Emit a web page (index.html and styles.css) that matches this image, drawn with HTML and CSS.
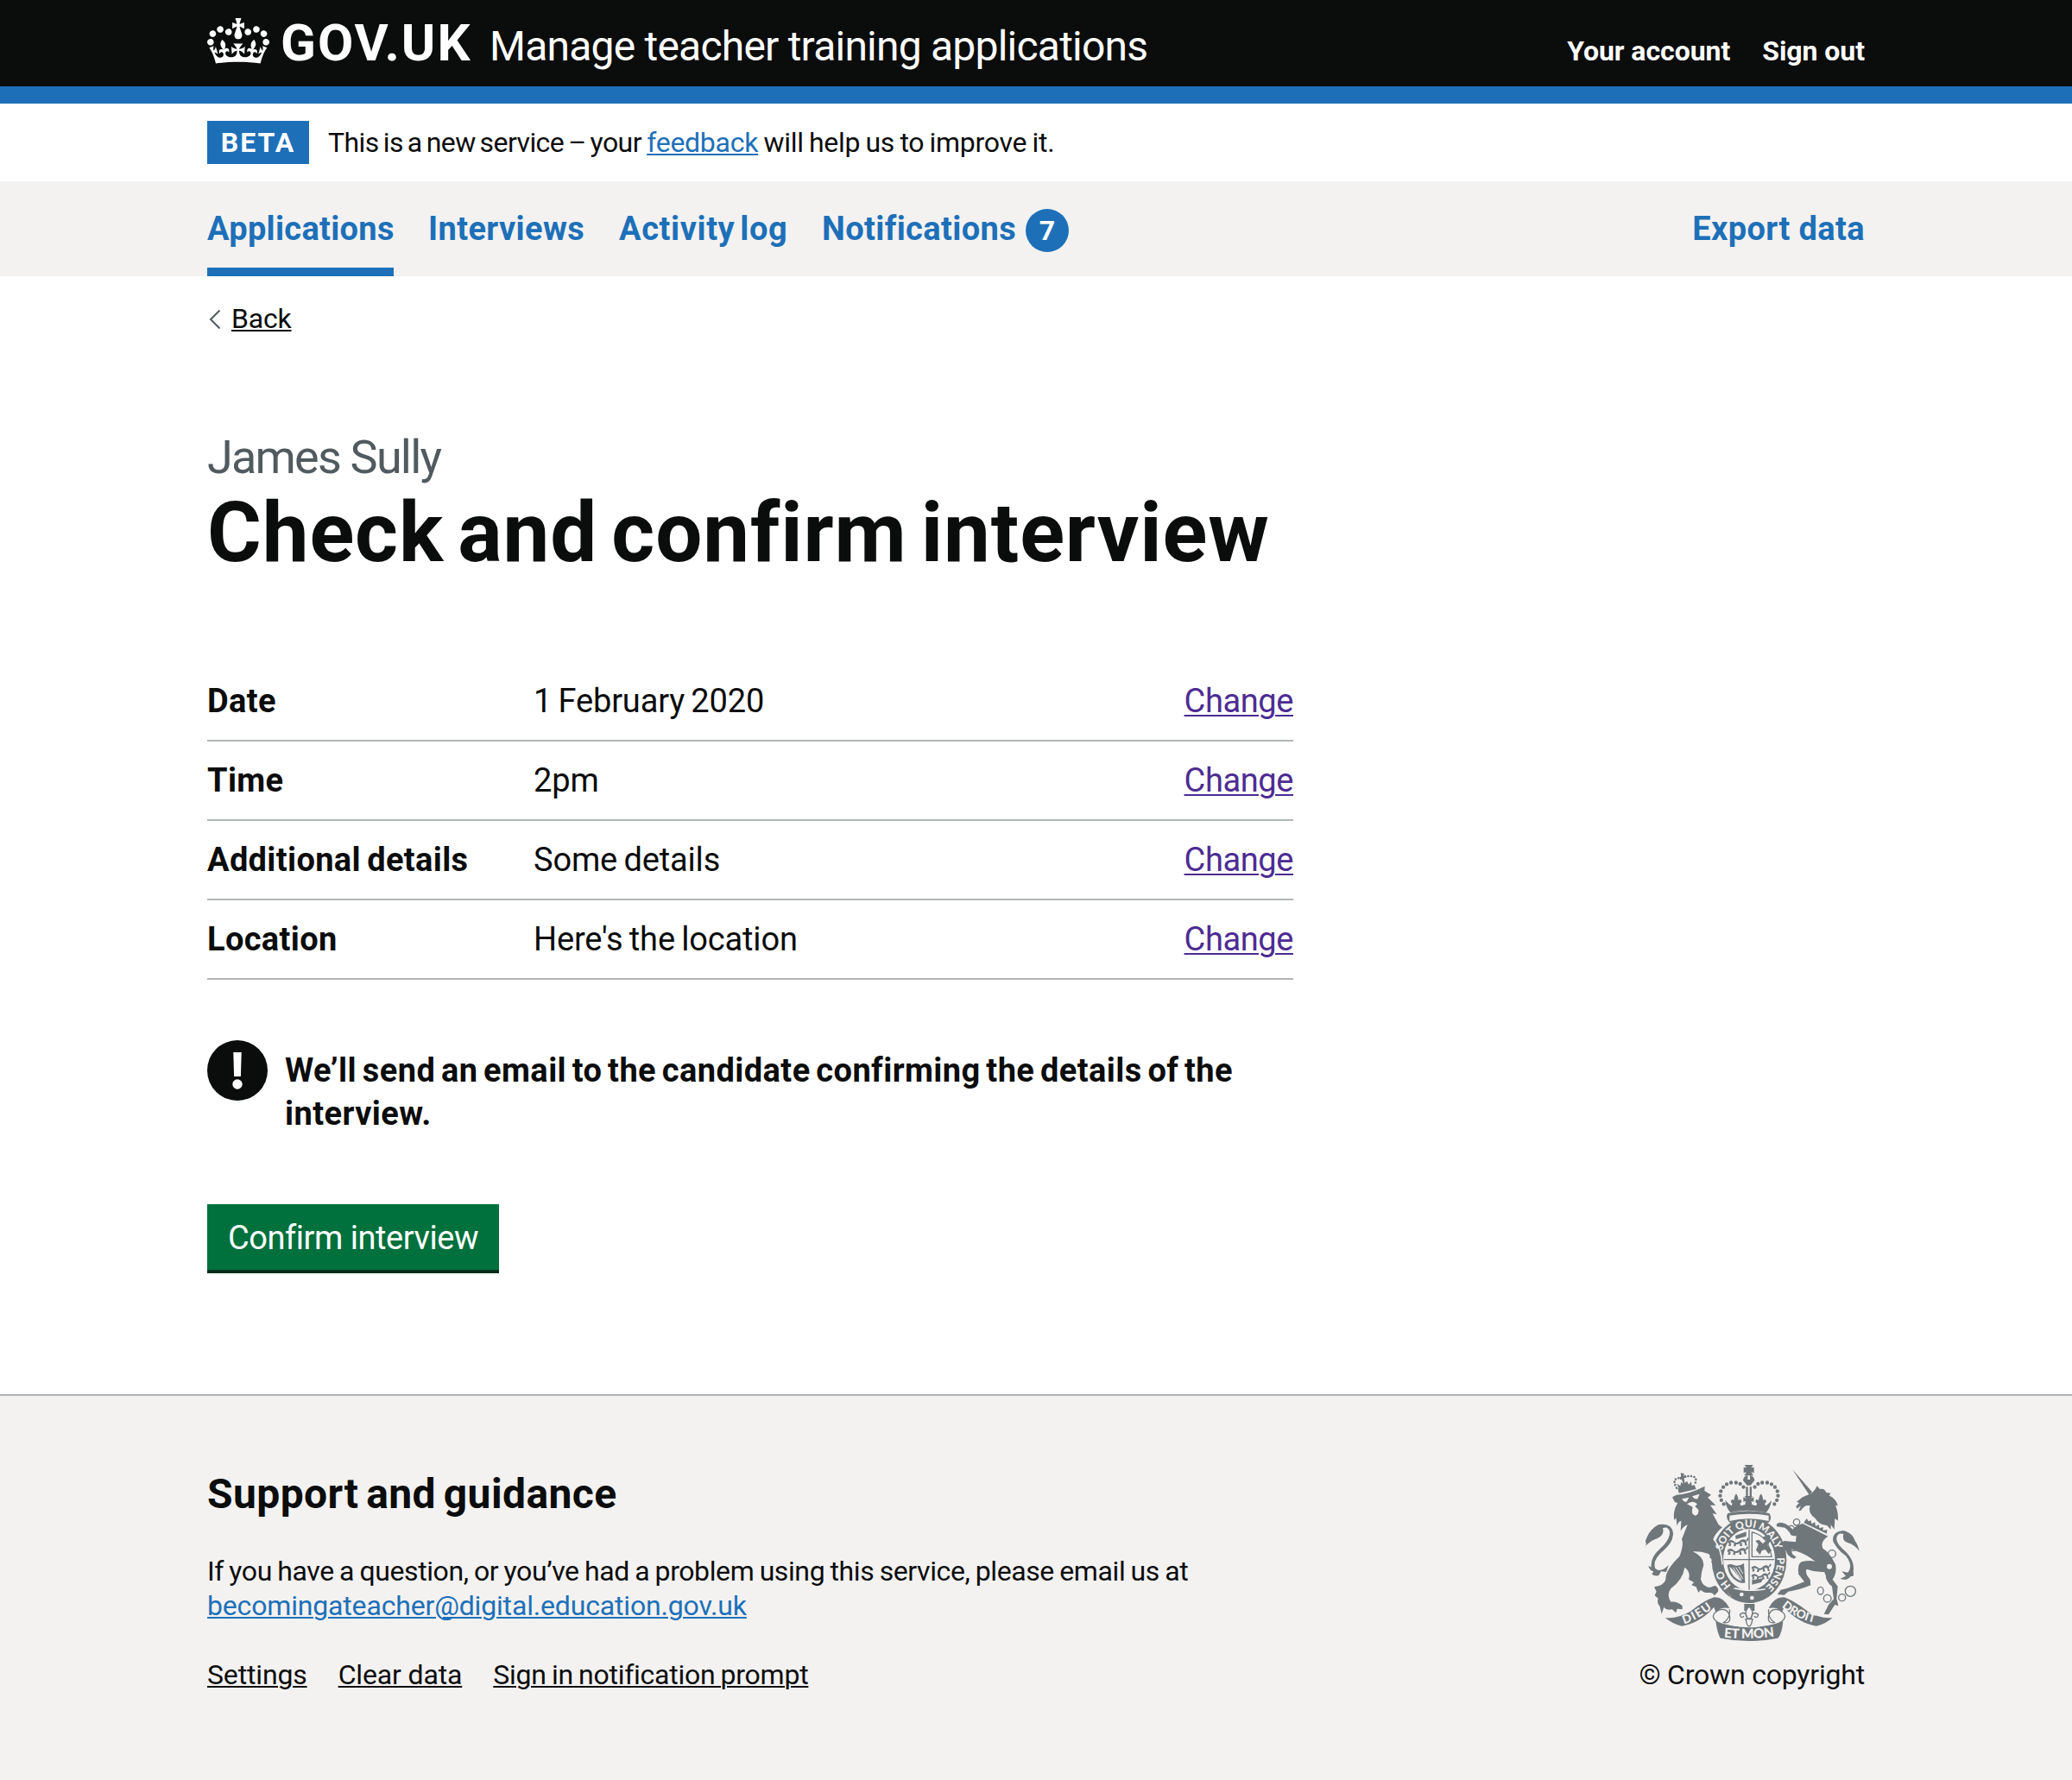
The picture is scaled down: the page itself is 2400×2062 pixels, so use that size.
FILE: index.html
```html
<!DOCTYPE html>
<html lang="en">
<head>
<meta charset="utf-8">
<title>Check and confirm interview - Manage teacher training applications - GOV.UK</title>
<link rel="stylesheet" href="styles.css">
</head>
<body>
<header class="header">
  <div class="container header-inner">
    <a class="logo" href="#">
      <svg class="logo-crown" viewBox="0 0 132 97" width="72" height="53" aria-hidden="true"><path fill="currentColor" fill-rule="evenodd" d="M25 30.2c3.5 1.5 7.7-.2 9.1-3.7 1.5-3.6-.2-7.8-3.9-9.2-3.6-1.4-7.6.3-9.1 3.9-1.4 3.5.3 7.5 3.9 9zM9 39.5c3.6 1.5 7.8-.2 9.2-3.7 1.5-3.6-.2-7.8-3.9-9.1-3.6-1.5-7.6.2-9.1 3.8-1.4 3.5.3 7.5 3.8 9zM4.4 57.2c3.5 1.5 7.7-.2 9.1-3.8 1.5-3.6-.2-7.7-3.9-9.1-3.5-1.5-7.6.3-9.1 3.8-1.4 3.5.3 7.6 3.9 9.1zm38.3-21.4c3.5 1.5 7.7-.2 9.1-3.8 1.5-3.6-.2-7.7-3.9-9.1-3.6-1.5-7.6.3-9.1 3.8-1.3 3.6.4 7.7 3.9 9.1zm64.4-5.6c-3.6 1.5-7.8-.2-9.1-3.7-1.5-3.6.2-7.8 3.8-9.2 3.6-1.4 7.7.3 9.2 3.9 1.3 3.5-.4 7.5-3.9 9zm15.9 9.3c-3.6 1.5-7.7-.2-9.1-3.7-1.5-3.6.2-7.8 3.7-9.1 3.6-1.5 7.7.2 9.2 3.8 1.5 3.5-.3 7.5-3.8 9zm4.7 17.7c-3.6 1.5-7.8-.2-9.2-3.8-1.5-3.6.2-7.7 3.9-9.1 3.6-1.5 7.7.3 9.2 3.8 1.3 3.5-.4 7.6-3.9 9.1zM89.3 35.8c-3.6 1.5-7.8-.2-9.2-3.8-1.4-3.6.2-7.7 3.9-9.1 3.6-1.5 7.7.3 9.2 3.8 1.4 3.6-.3 7.7-3.9 9.1zM69.7 17.7l8.9 4.7V9.3l-8.9 2.8c-.2-.3-.5-.6-.9-.9L72.4 0H59.6l3.5 11.2c-.3.3-.6.5-.9.9l-8.8-2.8v13.1l8.8-4.7c.3.3.6.7.9.9l-5 15.4v.1c-.2.8-.4 1.6-.4 2.4 0 4.1 3.1 7.5 7 8.1h.2c.3 0 .7.1 1 .1.4 0 .7 0 1-.1h.2c4-.6 7.1-4.1 7.1-8.1 0-.8-.1-1.7-.4-2.4V34l-5.1-15.4c.4-.2.7-.6 1-.9zM66 92.8c16.9 0 32.8 1.1 47.1 3.2 4-16.9 8.9-26.7 14-33.5l-9.6-3.4c1 4.9 1.1 7.2 0 10.2-1.5-1.4-3-4.3-4.2-8.7L108.6 76c2.8-2 5-3.2 7.5-3.3-4.4 9.4-10 11.9-13.6 11.2-4.3-.8-6.3-4.6-5.6-7.9 1-4.7 5.7-5.9 8-.5 4.3-8.7-3-11.4-7.6-8.8 7.1-7.2 7.9-13.5 2.1-21.1-8 6.1-8.1 12.3-4.5 20.8-4.7-5.4-12.1-2.5-9.5 6.2 3.4-5.2 7.9-2 7.2 3.1-.6 4.3-6.4 7.8-13.5 7.2-10.3-.9-10.9-8-11.2-13.8 2.5-.5 7.1 1.8 11 7.3L80.2 60c-4.1 4.4-8 5.3-12.3 5.4 1.4-4.4 8-11.6 8-11.6H55.5s6.4 7.2 7.9 11.6c-4.2-.1-8-1-12.3-5.4l1.4 16.4c3.9-5.5 8.5-7.7 10.9-7.3-.3 5.8-.9 12.8-11.1 13.8-7.2.6-12.9-2.9-13.5-7.2-.7-5 3.8-8.3 7.1-3.1 2.7-8.7-4.6-11.6-9.4-6.2 3.7-8.5 3.6-14.7-4.6-20.8-5.8 7.6-5 13.9 2.2 21.1-4.7-2.6-11.9.1-7.7 8.8 2.3-5.5 7.1-4.2 8.1.5.7 3.3-1.3 7.1-5.7 7.9-3.5.7-9-1.8-13.5-11.2 2.5.1 4.7 1.3 7.5 3.3l-4.7-15.4c-1.2 4.4-2.7 7.2-4.3 8.7-1.1-3-.9-5.3 0-10.2l-9.5 3.4c5 6.9 9.9 16.7 14 33.5 14.8-2.1 30.8-3.2 47.7-3.2z"/></svg>
      <span class="logo-text">GOV.UK</span>
    </a>
    <a class="service-name" href="#">Manage teacher training applications</a>
    <nav class="account-nav">
      <a href="#">Your account</a>
      <a href="#">Sign out</a>
    </nav>
  </div>
</header>
<div class="header-bar"></div>

<div class="container phase-banner">
  <strong class="tag">BETA</strong>
  <span class="phase-text"><span class="phase-lead">This is a new service – your</span> <a class="link" href="#">feedback</a> will help us to improve it.</span>
</div>

<div class="primary-nav">
  <nav class="container nav-inner">
    <a class="nav-item nav-current" href="#">Applications</a>
    <a class="nav-item nav-interviews" href="#">Interviews</a>
    <a class="nav-item nav-activity" href="#">Activity log</a>
    <a class="nav-item nav-notifications" href="#">Notifications</a>
    <span class="badge">7</span>
    <a class="nav-item nav-export" href="#">Export data</a>
  </nav>
</div>

<main class="container main">
  <a class="back" href="#">
    <svg class="back-arrow" viewBox="0 0 14 24" width="14" height="24" aria-hidden="true"><path d="M12.5 1.5 2 12l10.500 10.500" fill="none" stroke="#505a5f" stroke-width="2"/></svg>
    <span class="back-text">Back</span>
  </a>
  <h1 class="title"><span class="caption">James Sully</span><span class="heading">Check and confirm interview</span></h1>
  <dl class="summary">
    <div class="row"><dt>Date</dt><dd>1 February 2020</dd><dd class="action"><a href="#">Change</a></dd></div>
    <div class="row"><dt>Time</dt><dd>2pm</dd><dd class="action"><a href="#">Change</a></dd></div>
    <div class="row"><dt>Additional details</dt><dd>Some details</dd><dd class="action"><a href="#">Change</a></dd></div>
    <div class="row"><dt>Location</dt><dd>Here's the location</dd><dd class="action"><a href="#">Change</a></dd></div>
  </dl>
  <div class="warning">
    <svg class="warning-icon" viewBox="0 0 70 70" width="70" height="70" aria-hidden="true"><circle cx="35" cy="35" r="35" fill="#0b0c0c"/><path d="M30.300 14h9.400l-.8 28h-7.800z" fill="#fff"/><circle cx="35" cy="51" r="5.700" fill="#fff"/></svg>
    <strong class="warning-text">We’ll send an email to the candidate confirming the details of the<br>interview.</strong>
  </div>
  <button class="button" type="button">Confirm interview</button>
</main>

<footer class="footer">
  <div class="container footer-inner">
    <div class="footer-main">
      <h2 class="footer-title">Support and guidance</h2>
      <p class="footer-text"><span class="footer-line">If you have a question, or you’ve had a problem using this service, please email us at</span><br><a class="link" href="#">becomingateacher@digital.education.gov.uk</a></p>
      <div class="footer-links"><a class="fl-settings" href="#">Settings</a><a class="fl-clear" href="#">Clear data</a><a class="fl-prompt" href="#">Sign in notification prompt</a></div>
    </div>
    <div class="footer-meta">
      <svg class="crest" viewBox="72 54 750 612" width="250" height="204" aria-hidden="true">
        <defs>
          <path id="arc-left" d="M376 473A97 114 0 0 1 343 408"/>
          <path id="arc-top" d="M345 352A97 114 0 0 1 533 362"/>
          <path id="arc-right" d="M535 376A97 114 0 0 1 486 484"/>
          <path id="ribbon-left" d="M212 607Q265 590 315 548"/>
          <path id="ribbon-right" d="M551 546Q600 590 672 604"/>
          <path id="ribbon-base" d="M350 653Q438 662 528 650"/>
          <g id="leopards">
            <path d="M0 8q12-10 22 0t22-4q12-8 22 2l-4 8q-12-8-20 0t-20 0q-12-6-20 2z"/>
            <path d="M6 12l-4 12h8l2-9zM22 14l-2 11h7l3-11zM42 12v12h8l-2-12zM58 10l2 12h7l-3-12zM2-2l6 5M64 2l6-8 3 6-6 8z"/>
          </g>
        </defs>
        <g class="crest-fill">
          <!-- garter -->
          <ellipse cx="438" cy="385" rx="130" ry="149"/>
        </g>
        <ellipse class="crest-light" cx="438" cy="383" rx="90" ry="107"/>
        <g class="crest-fill">
          <!-- lion and its crown -->
          <path d="M190 136l58-12 6 14-60 14z"/>
          <g class="pearls"><path d="M186 134Q166 100 200 99M204 97Q222 92 238 93Q262 96 248 124"/></g>
          <path d="M200 82l12 2-1 8 8-2 2 8-9 1 2 18 8-7 6 12 9-10 2 18-44 9-8-20 12 8 3-14 7 8-5-17-6 1-2-8 6-2z"/>
          <path d="M171 166L186 158Q234 154 284 128L283 144 306 158 294 167 322 194 303 194 326 226 311 223 332 262 346 272Q320 292 314 312Q334 340 342 382Q346 404 338 416L328 398 322 414 312 408Q316 396 306 392Q314 382 300 376Q306 366 294 362Q272 354 242 355Q280 372 280 402Q272 424 270 452Q278 478 302 480L320 473Q334 482 330 494L318 508Q310 496 300 498Q280 500 270 488L262 498 254 478 238 472 246 462 228 452Q236 426 214 410Q208 452 166 484Q150 506 166 530Q190 528 206 544L206 556 188 554 184 568 170 556Q150 560 142 548L134 572 128 546Q116 536 122 518L110 508 116 494 108 478Q140 474 148 454Q146 420 196 372Q212 330 204 312L224 262Q210 266 200 284L202 248Q190 250 188 268L184 238 178 246Q172 214 190 186L180 184z"/>
          <path d="M72 342Q84 336 78 318Q90 280 122 262Q170 254 174 292Q174 322 142 350Q100 384 112 414Q130 430 158 402L150 426 132 424 124 438Q112 442 100 434L106 424Q92 422 88 404L98 410Q94 376 128 346Q164 314 162 286Q156 266 138 274Q146 300 112 312Q92 320 72 342z"/>
          <!-- unicorn -->
          <path d="M588 69l70 80-12 8zM603 182L624 166 656 152 668 138 674 127 684 138Q700 134 706 150L722 152 716 160Q742 174 746 196L738 194Q750 224 746 248L736 240 734 278 722 262 722 278 708 264Q680 262 668 240Q640 220 650 196Q632 190 618 212L610 214 618 196 604 206 601 198 612 186z"/>
          <path d="M624 258Q664 278 712 302Q684 320 694 344Q718 358 738 400Q744 430 728 452L746 476 742 518 748 544 736 540 714 574 698 572 714 540 732 520 726 476Q706 464 700 426Q668 428 638 416Q630 430 650 452L652 472Q610 490 574 494L560 506 536 504 548 488 572 482 630 460 610 434Q604 398 622 390Q650 384 668 390Q640 366 598 352L584 346 588 364 602 374 594 380Q572 374 566 352L546 340Q546 324 560 318L600 322 602 300Q580 304 578 284L562 272 534 268Q530 256 546 254Q566 254 590 278Q600 264 624 258z"/>
          <path d="M821 354Q816 330 806 318Q798 290 766 282Q724 286 730 320Q746 350 774 370Q800 404 782 428L760 424 774 440 754 450Q780 458 792 440Q804 446 800 424Q806 390 776 358Q738 326 742 308Q746 288 766 294Q760 318 780 324Q806 332 821 354z"/>
          <!-- royal crown -->
          <path d="M421 53h32l-8 11 10-2v20l-10-3 8 12h-32l8-12-10 3V62l10 2z"/>
          <path d="M417 108a20 20 0 0 1 16-18v15h8V90a20 20 0 0 1 16 18l-14 17h-12zM427 130h7v32h-7zM440 130h7v32h-7z"/>
          <path d="M356 178l12 12 9 6 3-8q-10-4-2-14l8 2q-2-10 7-22 9 12 7 22l9-2q7 10-3 14l4 8 14-4 2-12-8 2v-16l10 4-6-8h28l-6 8 10-4v16l-8-2 2 12 14 4 4-8q-10-4-3-14l9 2q-2-10 7-22 9 12 7 22l8-2q8 10-2 14l3 8 9-6 12-12q-4 25-19 42-72-15-124 0-15-17-18-42z"/>
          <path d="M364 222Q438 206 508 222Q520 238 506 254H370Q354 238 364 222z"/>
        </g>
        <g class="pearls big"><path d="M350 190Q330 165 342 140Q355 117 380 115Q410 114 419 132"/><path d="M526 190Q546 165 534 140Q521 117 496 115Q466 114 457 132"/></g>
        <g class="crest-light">
          <path d="M370 230q68-12 136 0v19q-68-16-136 0z"/>
          <path d="M205 172l24-5-8 15q-12 2-16-10zM240 163l26-8-7 17q-12 2-19-9zM222 190q20-16 36 0l-8 8 12 12q2 16-10 20-14-2-12-20l2-10z"/>
          <path d="M636 232L720 282 714 298 624 254z"/>
          <circle cx="412" cy="504" r="7"/><circle cx="448" cy="516" r="7"/>
          <circle cx="717" cy="407" r="9"/><circle cx="696" cy="442" r="9"/>
        </g>
        <path class="crest-fill" d="M638 240l6 10 9-3 2 12 12-6 2 14 12-6 1 13 13-4v12l14-3-1 14-80-38z"/>
        <path class="crest-gap" d="M372 478Q430 496 494 486M352 268Q326 288 316 312Q342 345 345 400M372 470Q358 490 376 512"/>
        <g class="crest-fill">
          <path d="M366 470q26-8 22 12-20 0-8 16 12 6 20-2 0 20-20 20-26-20-14-46z"/>
          <use href="#leopards" transform="translate(364 312)"/><use href="#leopards" transform="translate(362 342)"/><path d="M390 300l38-14v16l-36 10z"/>
          <use href="#leopards" transform="translate(446 402) scale(.95)"/><use href="#leopards" transform="translate(446 430) scale(.9)"/><path d="M448 454l40-6-8 14-32 8z"/>
          <path d="M462 350l8-20-10-12 12-4 14 14 12-12-14-10 12-6 16 18-10 16 14 16-10 14-12-16-12 4-6 14z"/>
          <path fill-rule="evenodd" d="M362 402Q372 396 384 402Q402 408 420 396L424 464H410Q368 452 362 402zM369 407Q378 446 412 459Q400 438 380 416z"/>
        </g>
        <path class="crest-line" d="M350 383H526M438 278V488M448 288Q506 300 516 373H448z"/>
        <path class="crest-gap thin" d="M392 410l24 40M402 408l14 24M382 410l30 44"/>
        <!-- motto ribbons -->
        <g class="crest-fill">
          <path d="M146 585Q190 590 236 562Q280 526 316 514Q350 512 370 552Q340 546 322 566L316 548Q270 602 204 614Q174 608 146 585z"/>
          <path d="M728 585Q684 590 640 562Q594 526 560 514Q524 512 506 552Q536 546 552 566L560 548Q606 602 672 614Q702 608 728 585z"/>
          <path d="M322 598Q438 640 556 598Q552 642 538 656Q438 676 338 656Q328 640 322 598z"/>
          <path d="M421 537h36v24h-36z"/>
        </g>
        <path class="crest-outline" d="M370 556Q374 586 350 602Q376 606 370 578Q362 550 334 558Q310 570 314 584Q324 612 400 618M506 556Q502 586 526 602Q500 606 506 578Q514 550 542 558Q566 570 562 584Q552 612 476 618"/>
        <path class="crest-outline petals" d="M438 546Q418 564 432 588H444Q458 564 438 546zM432 588Q426 558 406 574Q410 590 420 580M444 588Q450 558 470 574Q466 590 456 580M426 590H450L446 606Q438 624 430 606z"/>
        <g class="crest-outline"><circle cx="603" cy="253" r="11"/><circle cx="584" cy="276" r="11"/><ellipse cx="592" cy="338" rx="12" ry="14"/><circle cx="726" cy="363" r="13"/><ellipse cx="686" cy="491" rx="10" ry="13"/><circle cx="710" cy="518" r="13"/><circle cx="761" cy="515" r="12"/><circle cx="790" cy="493" r="18"/></g>
        <g class="crest-words">
          <text><textPath href="#arc-left" textLength="62">HO</textPath></text>
          <text><textPath href="#arc-top" textLength="262">SOIT QUI MALY</textPath></text>
          <text><textPath href="#arc-right" textLength="114">PENSE</textPath></text>
          <text class="ribbon-word"><textPath href="#ribbon-left" textLength="112">DIEU</textPath></text>
          <text class="ribbon-word"><textPath href="#ribbon-right" textLength="128">DROIT</textPath></text>
          <text class="ribbon-word base-word"><textPath href="#ribbon-base" textLength="176">ET MON</textPath></text>
        </g>
      </svg>
      <a class="copyright" href="#">© Crown copyright</a>
    </div>
  </div>
</footer>
</body>
</html>
```
FILE: styles.css
```css
* { box-sizing: border-box; }

body {
  margin: 0;
  min-height: 2062px;
  display: flex;
  flex-direction: column;
  background: #fff;
  color: #0b0c0c;
  font-family: Roboto, "Liberation Sans", sans-serif;
  font-size: 38px;
  line-height: 50px;
}

a { color: inherit; text-decoration: none; }
h1, h2, p, dl, dd { margin: 0; }

.container { width: 1920px; margin: 0 auto; }

.link {
  color: #1d70b8;
  text-decoration: underline 2px;
  text-underline-offset: 2px;
}

/* Header */
.header { height: 100px; background: #0b0c0c; color: #fff; }
.header-bar { height: 20px; background: #1d70b8; }
.header-inner { display: flex; align-items: baseline; height: 100px; padding-top: 14px; }
.logo { display: flex; align-items: baseline; gap: 13px; width: 327px; line-height: 71px; }
.logo-crown { align-self: flex-start; margin-top: 7px; }
.logo-text { font-size: 60px; font-weight: 700; letter-spacing: 2px; }
.service-name { font-size: 48px; letter-spacing: -0.78px; }
.account-nav {
  display: flex;
  gap: 37px;
  margin-left: auto;
  font-size: 32px;
  font-weight: 700;
  letter-spacing: -0.05px;
}

/* Phase banner */
.phase-banner { display: flex; gap: 22px; height: 90px; padding-top: 20px; font-size: 32px; }
.tag {
  width: 118px;
  height: 50px;
  background: #1d70b8;
  color: #fff;
  text-align: center;
  letter-spacing: 2px;
  line-height: 50px;
}
.phase-text { letter-spacing: -0.27px; word-spacing: -1.4px; }
.phase-lead { letter-spacing: -0.57px; word-spacing: -2.4px; }

/* Primary navigation */
.primary-nav { background: #f3f2f1; }
.nav-inner { display: flex; height: 110px; color: #1d70b8; font-weight: 700; letter-spacing: 0.38px; }
.nav-item { padding-top: 30px; white-space: nowrap; }
.nav-current { width: 216px; border-bottom: 10px solid #1d70b8; letter-spacing: 0.3px; }
.nav-interviews { width: 180px; margin-left: 40px; }
.nav-activity { width: 195px; margin-left: 41px; letter-spacing: 0.6px; word-spacing: -4px; }
.nav-notifications { width: 226px; margin-left: 40px; }
.badge {
  width: 50px;
  height: 50px;
  margin: 32px 0 0 10px;
  border-radius: 50%;
  background: #1d70b8;
  color: #fff;
  font-size: 32px;
  text-align: center;
}
.nav-export { margin-left: auto; }

/* Main content */
.main { display: flex; flex-direction: column; align-items: flex-start; padding: 30px 0 140px; }
.back { display: flex; align-items: center; gap: 12px; height: 40px; padding-left: 2px; font-size: 32px; line-height: 40px; }
.back-text { margin-top: -2px; letter-spacing: -0.2px; text-decoration: underline 2px; text-underline-offset: 2px; }
.title { display: flex; flex-direction: column; margin-top: 110px; }
.caption { color: #505a5f; font-size: 54px; font-weight: 400; letter-spacing: -1.8px; line-height: 60px; }
.heading { font-size: 96px; letter-spacing: 0.9px; word-spacing: -8.7px; line-height: 100px; margin-top: 7px; }

.summary { width: 1258px; margin-top: 100px; }
.row { display: grid; grid-template-columns: 378px 1fr auto; padding: 20px 0; border-bottom: 2px solid #b1b4b6; }
.row dt { font-weight: 700; letter-spacing: 0.35px; word-spacing: -2.5px; }
.row dd { letter-spacing: -0.15px; word-spacing: -2px; }
.row .action { letter-spacing: -0.4px; }
.action a { color: #4c2c92; text-decoration: underline 2px; text-underline-offset: 3px; }

.warning { display: flex; gap: 20px; margin-top: 70px; }
.warning-text { padding-top: 10px; letter-spacing: 0.43px; word-spacing: -3.2px; }

.button {
  width: 338px;
  height: 80px;
  margin-top: 80px;
  padding: 2px 0 4px;
  border: 0;
  background: #00703c;
  box-shadow: inset 0 -4px 0 #002d18;
  color: #fff;
  font: inherit;
  letter-spacing: -0.46px;
}

/* Footer */
.footer { flex: 1; border-top: 2px solid #b1b4b6; background: #f3f2f1; font-size: 32px; line-height: 40px; }
.footer-inner { display: flex; justify-content: space-between; padding-top: 80px; }
.footer-title { margin-top: 4px; font-size: 48px; letter-spacing: 0.4px; word-spacing: -3.5px; line-height: 60px; }
.footer-text { margin-top: 39px; letter-spacing: -0.17px; }
.footer-line { letter-spacing: -0.4px; word-spacing: -1.2px; }
.footer-links { display: flex; gap: 36px; margin-top: 40px; letter-spacing: -0.15px; }
.footer-links a { text-decoration: underline 2px; text-underline-offset: 2px; }
.footer-links .fl-prompt { letter-spacing: -0.25px; word-spacing: -1.5px; }
.footer-meta { display: flex; flex-direction: column; align-items: flex-end; }
.crest { margin-right: 6px; }
.copyright { margin-top: 19px; letter-spacing: -0.2px; }

/* Royal arms */
.crest-fill { fill: #6f777b; }
.crest-light { fill: #f3f2f1; }
.crest-outline { fill: none; stroke: #6f777b; stroke-width: 4; }
.petals { fill: #f3f2f1; }
.crest-line { fill: none; stroke: #6f777b; stroke-width: 4; }
.crest-gap { fill: none; stroke: #f3f2f1; stroke-width: 5; }
.crest-gap.thin { stroke-width: 3; }
.pearls { fill: none; stroke: #6f777b; stroke-width: 8; stroke-linecap: round; stroke-dasharray: 0 11; }
.pearls.big { stroke-width: 13; stroke-dasharray: 0 16; }
.crest-words { fill: #f3f2f1; font-family: Lato, sans-serif; font-size: 36px; font-weight: 900; }
.ribbon-word { font-size: 41px; }
.base-word { font-size: 46px; }
```
